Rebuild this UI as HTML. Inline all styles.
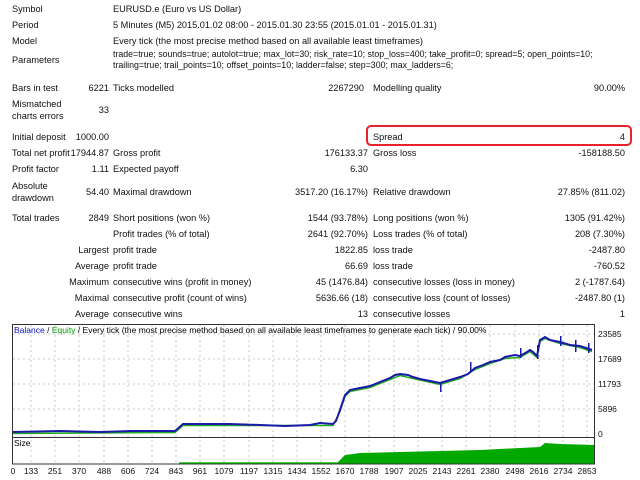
<!DOCTYPE html>
<html><head><meta charset="utf-8"><style>
body{margin:0;width:640px;height:480px;background:#fff;position:relative;overflow:hidden;font-family:"Liberation Sans",sans-serif;font-size:9.2px;color:#111}
.t{position:absolute;line-height:12px;white-space:nowrap}
.r{text-align:right}
</style></head><body>
<div class="t" style="left:12px;top:3px">Symbol</div>
<div class="t" style="left:113px;top:3px">EURUSD.e (Euro vs US Dollar)</div>
<div class="t" style="left:12px;top:19px">Period</div>
<div class="t" style="left:113px;top:19px">5 Minutes (M5) 2015.01.02 08:00 - 2015.01.30 23:55 (2015.01.01 - 2015.01.31)</div>
<div class="t" style="left:12px;top:35px">Model</div>
<div class="t" style="left:113px;top:35px">Every tick (the most precise method based on all available least timeframes)</div>
<div class="t" style="left:12px;top:54px">Parameters</div>
<div class="t" style="left:113px;top:49px;line-height:11px;font-size:8.8px">trade=true; sounds=true; autolot=true; max_lot=30; risk_rate=10; stop_loss=400; take_profit=0; spread=5; open_points=10;<br>trailing=true; trail_points=10; offset_points=10; ladder=false; step=300; max_ladders=6;</div>

<div class="t" style="left:12px;top:82px">Bars in test</div>
<div class="t r" style="right:531px;top:82px">6221</div>
<div class="t" style="left:113px;top:82px">Ticks modelled</div>
<div class="t r" style="right:276px;top:82px">2267290</div>
<div class="t" style="left:373px;top:82px">Modelling quality</div>
<div class="t r" style="right:15px;top:82px">90.00%</div>

<div class="t" style="left:12px;top:98px;line-height:12px">Mismatched<br>charts errors</div>
<div class="t r" style="right:531px;top:104px">33</div>

<div class="t" style="left:12px;top:131px">Initial deposit</div>
<div class="t r" style="right:531px;top:131px">1000.00</div>
<div style="position:absolute;left:366px;top:125px;width:262px;height:17px;border:2px solid #e8222a;border-radius:5px"></div>
<div class="t" style="left:373px;top:131px">Spread</div>
<div class="t r" style="right:15px;top:131px">4</div>

<div class="t" style="left:12px;top:147px">Total net profit</div>
<div class="t r" style="right:531px;top:147px">17944.87</div>
<div class="t" style="left:113px;top:147px">Gross profit</div>
<div class="t r" style="right:272px;top:147px">176133.37</div>
<div class="t" style="left:373px;top:147px">Gross loss</div>
<div class="t r" style="right:15px;top:147px">-158188.50</div>

<div class="t" style="left:12px;top:163px">Profit factor</div>
<div class="t r" style="right:531px;top:163px">1.11</div>
<div class="t" style="left:113px;top:163px">Expected payoff</div>
<div class="t r" style="right:272px;top:163px">6.30</div>

<div class="t" style="left:12px;top:180px">Absolute<br>drawdown</div>
<div class="t r" style="right:531px;top:186px">54.40</div>
<div class="t" style="left:113px;top:186px">Maximal drawdown</div>
<div class="t r" style="right:272px;top:186px">3517.20 (16.17%)</div>
<div class="t" style="left:373px;top:186px">Relative drawdown</div>
<div class="t r" style="right:15px;top:186px">27.85% (811.02)</div>

<div class="t" style="left:12px;top:212px">Total trades</div>
<div class="t r" style="right:531px;top:212px">2849</div>
<div class="t" style="left:113px;top:212px">Short positions (won %)</div>
<div class="t r" style="right:272px;top:212px">1544 (93.78%)</div>
<div class="t" style="left:373px;top:212px">Long positions (won %)</div>
<div class="t r" style="right:15px;top:212px">1305 (91.42%)</div>

<div class="t" style="left:113px;top:228px">Profit trades (% of total)</div>
<div class="t r" style="right:272px;top:228px">2641 (92.70%)</div>
<div class="t" style="left:373px;top:228px">Loss trades (% of total)</div>
<div class="t r" style="right:15px;top:228px">208 (7.30%)</div>

<div class="t r" style="right:531px;top:244px">Largest</div>
<div class="t" style="left:113px;top:244px">profit trade</div>
<div class="t r" style="right:272px;top:244px">1822.85</div>
<div class="t" style="left:373px;top:244px">loss trade</div>
<div class="t r" style="right:15px;top:244px">-2487.80</div>

<div class="t r" style="right:531px;top:260px">Average</div>
<div class="t" style="left:113px;top:260px">profit trade</div>
<div class="t r" style="right:272px;top:260px">66.69</div>
<div class="t" style="left:373px;top:260px">loss trade</div>
<div class="t r" style="right:15px;top:260px">-760.52</div>

<div class="t r" style="right:531px;top:276px">Maximum</div>
<div class="t" style="left:113px;top:276px">consecutive wins (profit in money)</div>
<div class="t r" style="right:272px;top:276px">45 (1476.84)</div>
<div class="t" style="left:373px;top:276px">consecutive losses (loss in money)</div>
<div class="t r" style="right:15px;top:276px">2 (-1787.64)</div>

<div class="t r" style="right:531px;top:292px">Maximal</div>
<div class="t" style="left:113px;top:292px">consecutive profit (count of wins)</div>
<div class="t r" style="right:272px;top:292px">5636.66 (18)</div>
<div class="t" style="left:373px;top:292px">consecutive loss (count of losses)</div>
<div class="t r" style="right:15px;top:292px">-2487.80 (1)</div>

<div class="t r" style="right:531px;top:308px">Average</div>
<div class="t" style="left:113px;top:308px">consecutive wins</div>
<div class="t r" style="right:272px;top:308px">13</div>
<div class="t" style="left:373px;top:308px">consecutive losses</div>
<div class="t r" style="right:15px;top:308px">1</div>

<svg style="position:absolute;left:0;top:0" width="640" height="480" font-family="Liberation Sans, sans-serif" font-size="8.5">
<g stroke="#c8c8c8" stroke-dasharray="2,3" stroke-width="1">
<line x1="31" y1="325" x2="31" y2="463"/><line x1="55" y1="325" x2="55" y2="463"/><line x1="79" y1="325" x2="79" y2="463"/><line x1="104" y1="325" x2="104" y2="463"/><line x1="128" y1="325" x2="128" y2="463"/><line x1="152" y1="325" x2="152" y2="463"/><line x1="176" y1="325" x2="176" y2="463"/><line x1="200" y1="325" x2="200" y2="463"/><line x1="224" y1="325" x2="224" y2="463"/><line x1="249" y1="325" x2="249" y2="463"/><line x1="273" y1="325" x2="273" y2="463"/><line x1="297" y1="325" x2="297" y2="463"/><line x1="321" y1="325" x2="321" y2="463"/><line x1="345" y1="325" x2="345" y2="463"/><line x1="369" y1="325" x2="369" y2="463"/><line x1="394" y1="325" x2="394" y2="463"/><line x1="418" y1="325" x2="418" y2="463"/><line x1="442" y1="325" x2="442" y2="463"/><line x1="466" y1="325" x2="466" y2="463"/><line x1="490" y1="325" x2="490" y2="463"/><line x1="515" y1="325" x2="515" y2="463"/><line x1="539" y1="325" x2="539" y2="463"/><line x1="563" y1="325" x2="563" y2="463"/><line x1="587" y1="325" x2="587" y2="463"/>
<line x1="13" y1="334" x2="595" y2="334"/><line x1="13" y1="359" x2="595" y2="359"/><line x1="13" y1="384" x2="595" y2="384"/><line x1="13" y1="409" x2="595" y2="409"/>
</g>
<polygon fill="#00a800" points="179,463 337,463 345,455 360,453 400,452 440,451 480,450 520,448 540,447 545,443 560,444 595,445 595,464 179,464"/>
<line x1="179" y1="463" x2="337" y2="463" stroke="#00c000" stroke-width="1.5"/>
<polyline fill="none" stroke="#22aa22" stroke-width="1.5" transform="translate(0,1.5)" points="13,432 175,431 183,424 333,424 340,410 345,395 350,390 370,386 390,378 400,374 413,377 440,383 460,377 475,368 490,362 505,357 520,356 530,350 537,356 540,340 545,337 560,342 580,346 592,350"/>
<polyline fill="none" stroke="#1a1aa8" stroke-width="2" points="13,432 60,431 100,432 130,431 175,431 183,424 200,424 230,424 260,425 285,426 310,425 320,423 333,424 336,421 340,410 345,395 350,390 360,388 370,386 380,382 390,378 395,375 400,374 408,375 413,377 420,379 430,381 440,383 450,380 460,377 468,374 475,368 483,365 490,362 500,360 505,357 515,355 520,356 527,352 530,350 533,352 537,356 540,340 545,337 550,340 560,342 570,345 580,346 592,350"/>
<g fill="#1a1aa8">
<rect x="440" y="382" width="1.5" height="10"/><rect x="470" y="362" width="1.5" height="10"/><rect x="520" y="348" width="1.5" height="10"/><rect x="537" y="345" width="1.5" height="14"/><rect x="560" y="336" width="1.5" height="10"/><rect x="575" y="340" width="1.5" height="12"/><rect x="588" y="343" width="1.5" height="10"/>
</g>
<rect x="12.5" y="324.5" width="582" height="113" fill="none" stroke="#333" stroke-width="1"/>
<rect x="12.5" y="437.5" width="582" height="26.5" fill="none" stroke="#333" stroke-width="1"/>
<text x="14" y="333"><tspan fill="#1010c0">Balance</tspan><tspan> / </tspan><tspan fill="#00a000">Equity</tspan><tspan> / Every tick (the most precise method based on all available least timeframes to generate each tick) / 90.00%</tspan></text>
<text x="14" y="446">Size</text>
<g fill="#111">
<text x="598" y="337">23585</text><text x="598" y="362">17689</text><text x="598" y="387">11793</text><text x="598" y="412">5896</text><text x="598" y="437">0</text>
</g>
<g fill="#111" text-anchor="middle">
<text x="13" y="474">0</text><text x="31" y="474">133</text><text x="55" y="474">251</text><text x="79" y="474">370</text><text x="104" y="474">488</text><text x="128" y="474">606</text><text x="152" y="474">724</text><text x="176" y="474">843</text><text x="200" y="474">961</text><text x="224" y="474">1079</text><text x="249" y="474">1197</text><text x="273" y="474">1315</text><text x="297" y="474">1434</text><text x="321" y="474">1552</text><text x="345" y="474">1670</text><text x="369" y="474">1788</text><text x="394" y="474">1907</text><text x="418" y="474">2025</text><text x="442" y="474">2143</text><text x="466" y="474">2261</text><text x="490" y="474">2380</text><text x="515" y="474">2498</text><text x="539" y="474">2616</text><text x="563" y="474">2734</text><text x="587" y="474">2853</text>
</g>
</svg>
</body></html>
